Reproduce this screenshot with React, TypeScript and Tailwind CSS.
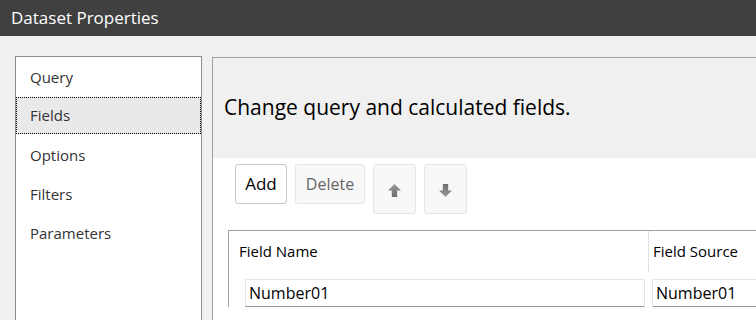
import React from "react";

const navItems = ["Query", "Fields", "Options", "Filters", "Parameters"];

function Arrow({ dir }: { dir: "up" | "down" }) {
  return (
    <svg width="15" height="15" viewBox="0 0 14 14" className={dir === "down" ? "rotate-180" : ""}>
      <defs>
        <linearGradient id={`g-${dir}`} x1="0" y1="0" x2="0" y2="1">
          <stop offset="0" stopColor="#9a9a9a" />
          <stop offset="1" stopColor="#6e6e6e" />
        </linearGradient>
      </defs>
      <path d="M7 1 L13 7 L9.5 7 L9.5 13 L4.5 13 L4.5 7 L1 7 Z" fill={`url(#g-${dir})`} />
    </svg>
  );
}

export default function App() {
  return (
    <div
      className="w-[756px] h-[320px] overflow-hidden bg-[#f0f0f0] flex flex-col"
      style={{ fontFamily: '"Open Sans", "Noto Sans", sans-serif' }}
    >
      <div className="h-[36px] shrink-0 bg-[#404040] text-white text-[17px] flex items-center pl-[11px]">
        Dataset Properties
      </div>

      <div className="flex flex-1 min-h-0 pt-[20px] pl-[15px]">
        {/* left nav */}
        <div className="w-[187px] shrink-0 bg-white border border-b-0 border-[#8c8c8c] pt-[1px]">
          {navItems.map((item) => (
            <div
              key={item}
              className={
                item === "Fields"
                  ? "h-[37px] mb-[2px] flex items-center pl-[13px] text-[15px] text-[#333] bg-[#e9e9e9] border border-dotted border-black"
                  : "h-[39px] flex items-center pl-[14px] text-[15px] text-[#333]"
              }
            >
              {item}
            </div>
          ))}
        </div>

        {/* right panel */}
        <div className="flex-1 ml-[10px] mt-[1px] border-l border-t border-[#a0a0a0] flex flex-col min-w-0">
          <div className="h-[100px] shrink-0 bg-[#f0f0f0] flex items-center pl-[11px] text-[21px] text-black">
            Change query and calculated fields.
          </div>
          <div className="flex-1 bg-white pl-[15px] pt-[6px]">
            <div className="flex items-start gap-[8px] pl-[7px]">
              <button className="h-[40px] w-[52px] rounded-[3px] border border-[#c8c8c8] bg-white text-[17px] text-black">
                Add
              </button>
              <button className="h-[40px] w-[70px] rounded-[3px] border border-[#e6e6e6] bg-[#f8f8f8] text-[16px] text-[#666]">
                Delete
              </button>
              <button className="h-[50px] w-[43px] rounded-[3px] border border-[#e6e6e6] bg-[#f8f8f8] flex items-center justify-center pt-[2px]">
                <Arrow dir="up" />
              </button>
              <button className="h-[50px] w-[43px] rounded-[3px] border border-[#e6e6e6] bg-[#f8f8f8] flex items-center justify-center pt-[2px]">
                <Arrow dir="down" />
              </button>
            </div>

            <div className="mt-[16px] border-l border-t border-[#a0a0a0]">
              <div className="flex h-[41px]">
                <div className="w-[420px] shrink-0 flex items-center pl-[10px] text-[15px] text-black border-r border-[#e0e0e0]">
                  Field Name
                </div>
                <div className="flex-1 flex items-center pl-[4px] text-[15px] text-black whitespace-nowrap">
                  Field Source
                </div>
              </div>
              <div className="flex pt-[7px]">
                <div className="w-[420px] shrink-0 pl-[16px] pr-[4px]">
                  <div className="h-[28px] border border-[#e6e6e6] border-b-[#999] flex items-center pl-[3px] text-[16px] text-black">
                    Number01
                  </div>
                </div>
                <div className="flex-1 pl-[3px]">
                  <div className="h-[28px] border border-r-0 border-[#e6e6e6] border-b-[#999] flex items-center pl-[3px] text-[16px] text-black">
                    Number01
                  </div>
                </div>
              </div>
            </div>
          </div>
        </div>
      </div>
    </div>
  );
}
